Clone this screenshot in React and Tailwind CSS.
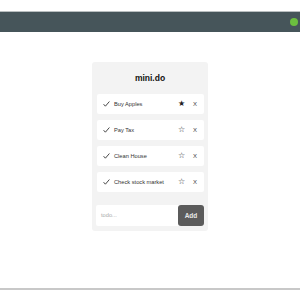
import React from 'react'

const todos = [
  { text: 'Buy Apples', starred: true },
  { text: 'Pay Tax', starred: false },
  { text: 'Clean House', starred: false },
  { text: 'Check stock market', starred: false },
]

const Check = () => (
  <svg width="7" height="6" viewBox="0 0 7 6" className="shrink-0">
    <path d="M0.6 3.2 L2.4 5.2 L6.4 0.5" fill="none" stroke="#333" strokeWidth="0.9" />
  </svg>
)

const TodoRow = ({ text, starred }) => (
  <div className="h-[20px] bg-white rounded-[2px] flex items-center pl-[6px] pr-[7px] text-[5.7px] text-[#333]">
    <Check />
    <span className="ml-[4px] flex-1">{text}</span>
    <span className="text-[7.5px] leading-none text-[#222]">{starred ? '★' : '☆'}</span>
    <span className="ml-[8px] text-[6px] text-[#444]">X</span>
  </div>
)

export default function App() {
  return (
    <div className="w-[300px] h-[300px] bg-white flex flex-col font-['Liberation_Sans',Arial,sans-serif]">
      <div className="mt-[11px] h-[21px] border-t border-[#b9bfc0] bg-[#46555a] flex items-center justify-end pr-[2px]">
        <div className="w-[8px] h-[8px] rounded-full bg-[#6cbf3f]" />
      </div>
      <div className="flex-1 flex justify-center pt-[30px]">
        <div className="w-[116px] h-[169px] bg-[#f3f3f3] rounded-[3px] px-[4px] pb-[4px] flex flex-col">
          <div className="h-[32px] flex items-center justify-center text-[8.5px] font-bold text-[#111]">mini.do</div>
          <div className="flex flex-col gap-[6px] pl-[1px]">
            {todos.map((t) => (
              <TodoRow key={t.text} {...t} />
            ))}
          </div>
          <div className="mt-[13px] h-[21px] bg-white rounded-[2px] flex items-center pl-[5px]">
            <span className="flex-1 text-[5.7px] text-[#aaa]">todo...</span>
            <button className="w-[26px] h-[21px] bg-[#5b5b5b] rounded-[3px] text-[#e8e8e8] text-[6.5px] font-bold">Add</button>
          </div>
        </div>
      </div>
      <div className="h-[2px] bg-[#c8c8c8] mb-[10px]" />
    </div>
  )
}
